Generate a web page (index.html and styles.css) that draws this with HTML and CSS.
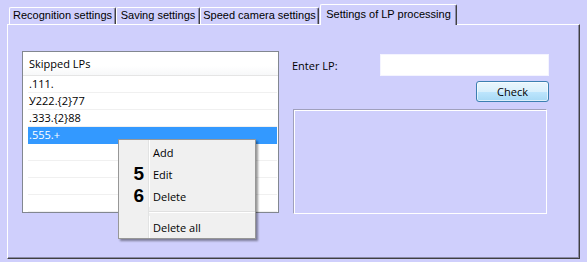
FILE: index.html
```html
<!doctype html>
<html lang="en">
  <head>
    <meta charset="UTF-8" />
    <title>Settings of LP processing</title>
    <link rel="stylesheet" href="styles.css">
  </head>
  <body>
    <div class="window">
      <div class="tabs">
        <div class="tab tab-recognition">Recognition settings</div>
        <div class="tab tab-saving">Saving settings</div>
        <div class="tab tab-speed">Speed camera settings</div>
        <div class="tab tab-lp active">Settings of LP processing</div>
      </div>

      <div class="panel">
        <div class="list">
          <div class="list-head">Skipped LPs</div>
          <div class="row">.111.</div>
          <div class="row">У222.{2}77</div>
          <div class="row">.333.{2}88</div>
          <div class="row selected">.555.+</div>
          <div class="row"></div>
          <div class="row"></div>
          <div class="row"></div>
          <div class="row"></div>
        </div>

        <div class="side">
          <div class="field">
            <label for="lp-input">Enter LP:</label>
            <input type="text" id="lp-input" />
          </div>
          <div class="actions">
            <button>Check</button>
          </div>
          <div class="group"></div>
        </div>
      </div>

      <!-- context menu over the list -->
      <div class="menu">
        <div class="menu-item"><span class="num"></span>Add</div>
        <div class="menu-item"><span class="num">5</span>Edit</div>
        <div class="menu-item"><span class="num">6</span>Delete</div>
        <div class="menu-sep"></div>
        <div class="menu-item"><span class="num"></span>Delete all</div>
      </div>
    </div>
  </body>
</html>
```

FILE: styles.css
```css
body {
  margin: 0;
  background-color: #cfcffc;
  font-family: 'Liberation Sans', Arial, sans-serif;
  font-size: 11px;
  color: #000;
}
.window {
  position: relative;
  width: 587px;
  height: 262px;
}
.tabs {
  display: flex;
  align-items: flex-end;
  height: 24px;
  padding-left: 9px;
}
.tab {
  box-sizing: border-box;
  height: 17px;
  line-height: 15px;
  text-align: center;
  white-space: nowrap;
  border-top: 1px solid #fff;
  border-left: 1px solid #fff;
  border-right: 1px solid #404040;
  box-shadow: inset -1px 0 0 #8a8aa8;
  border-radius: 2px 2px 0 0;
}
.tab-recognition {
  width: 107px;
}
.tab-saving {
  width: 84px;
}
.tab-speed {
  width: 119px;
}
.tab-lp {
  width: 137px;
}
.tab.active {
  position: relative;
  z-index: 1;
  height: 21px;
  margin-bottom: -1px;
  margin-left: 1px;
  line-height: 19px;
  background-color: #cfcffc;
}
.panel {
  box-sizing: border-box;
  display: flex;
  align-items: flex-start;
  width: 573px;
  height: 235px;
  margin-left: 7px;
  padding: 26px 0 0 14px;
  border-top: 1px solid #fff;
  border-left: 1px solid #fff;
  border-right: 1px solid #404040;
  border-bottom: 1px solid #404040;
  box-shadow: inset -1px -1px 0 #8a8aa8;
}
.list {
  box-sizing: border-box;
  width: 257px;
  height: 162px;
  background-color: #fff;
  border: 1px solid #828790;
  font-family: 'Open Sans', sans-serif;
  font-size: 11px;
  overflow: hidden;
}
.list-head {
  box-sizing: border-box;
  height: 24px;
  line-height: 23px;
  padding-left: 6px;
  border-bottom: 1px solid #e5e5e5;
  background: linear-gradient(#fff, #fff 60%, #f7f8f9);
}
.row {
  box-sizing: border-box;
  height: 17px;
  line-height: 16px;
  margin: 0 1px 0 5px;
  padding-left: 1px;
  border-bottom: 1px solid #f0f0f0;
}
.row.selected {
  background-color: #3399ff;
  border-bottom-color: #3399ff;
  color: #fff;
}
.side {
  display: flex;
  flex-direction: column;
  width: 257px;
  margin-left: 13px;
  font-family: 'Open Sans', sans-serif;
  font-size: 11px;
}
.field {
  display: flex;
  align-items: center;
  justify-content: space-between;
  margin-top: 3px;
}
.field input {
  box-sizing: border-box;
  width: 169px;
  height: 22px;
  border: 1px solid #f4f4ff;
  background-color: #fff;
  outline: none;
}
.actions {
  display: flex;
  justify-content: flex-end;
  margin-top: 5px;
}
.actions button {
  box-sizing: border-box;
  width: 73px;
  height: 21px;
  padding: 0 0 1px;
  border: 1px solid #3c7fb1;
  border-radius: 3px;
  background: linear-gradient(#eaf6fd, #d9f0fc 50%, #bee6fd 51%, #a7d9f5);
  box-shadow: inset 0 0 0 1px rgba(255, 255, 255, 0.6);
  font-family: 'Open Sans', sans-serif;
  font-size: 11px;
  color: #000;
}
.group {
  box-sizing: border-box;
  width: 254px;
  height: 105px;
  margin: 7px 0 0 1px;
  border: 1px solid #fff;
  border-top-color: #a0a0bc;
  border-left-color: #a0a0bc;
  box-shadow: inset 1px 1px 0 #fff;
}
.menu {
  position: absolute;
  left: 118px;
  top: 139px;
  box-sizing: border-box;
  width: 138px;
  padding-top: 1px;
  border: 1px solid #979797;
  background: linear-gradient(to right, #f0f0f0 29px, #e2e3e3 29px, #e2e3e3 30px, #fff 30px, #fff 31px, #f0f0f0 31px);
  box-shadow: 2px 2px 2px rgba(0, 0, 0, 0.4);
  font-family: 'Open Sans', sans-serif;
  font-size: 11px;
}
.menu-item {
  display: flex;
  align-items: center;
  height: 22px;
}
.num {
  box-sizing: border-box;
  width: 29px;
  padding-right: 4px;
  margin-right: 5px;
  text-align: right;
  font-family: 'Liberation Sans', Arial, sans-serif;
  font-weight: bold;
  font-size: 19px;
}
.menu-sep {
  height: 9px;
  margin-left: 30px;
  background: linear-gradient(#f0f0f0 4px, #e0e0e0 4px, #e0e0e0 5px, #fff 5px, #fff 6px, #f0f0f0 6px);
}
```
